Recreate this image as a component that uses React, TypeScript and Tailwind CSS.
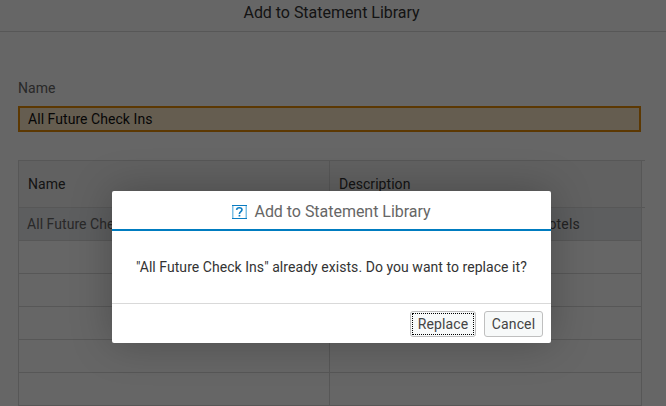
const rows = [
  { name: "All Future Check Ins", description: "hotels", selected: true },
  { name: "", description: "", selected: false },
  { name: "", description: "", selected: false },
  { name: "", description: "", selected: false },
  { name: "", description: "", selected: false },
  { name: "", description: "", selected: false },
];

function QuestionIcon() {
  return (
    <svg width="15" height="14" viewBox="0 0 15 14" fill="none" aria-hidden="true">
      <path d="M0.75 0.5V13.5M14.25 0.5V13.5" stroke="#7fc0e4" strokeWidth="1.5" />
      <path d="M0 0.5H15M0 13.5H15" stroke="#0a7cc2" />
      <path d="M4.6 4.9C4.7 3.4 5.8 2.7 7.3 2.7C8.9 2.7 10 3.5 10 4.8C10 6.6 7.4 6.6 7.4 8.9" stroke="#0a7cc2" strokeWidth="1.6" />
      <path d="M6.6 9.9H8.3V11.5H6.6Z" fill="#0a7cc2" />
    </svg>
  );
}

function StatementTable() {
  return (
    <div className="mt-7 ml-[18px] w-[627px]">
      <div className="flex h-12 border-y border-l border-[#d9d9d9] bg-[#f2f2f2] text-[#333]">
        <div className="flex w-[311px] items-center border-r border-[#d9d9d9] pl-[9px] tracking-[0.05px]">Name</div>
        <div className="flex w-[312px] items-center border-r border-[#d9d9d9] pl-[9px] tracking-[0.05px]">Description</div>
        <div className="flex-1 bg-white" />
      </div>
      {rows.map((row, i) => (
        <div
          key={i}
          className={`flex h-[33px] w-[624px] border-b border-x border-[#d9d9d9] text-[#666] ${row.selected ? "bg-[#e8eaee]" : "bg-white"}`}
        >
          <div className="flex w-[311px] items-center border-r border-[#d9d9d9] pl-2 tracking-[0.05px]">{row.name}</div>
          <div className="flex flex-1 items-center justify-end pr-[61px] tracking-[0.2px] text-[#555]">{row.description}</div>
        </div>
      ))}
    </div>
  );
}

export default function App() {
  return (
    <div className="relative h-[406px] w-[666px] overflow-hidden bg-white font-['Roboto',sans-serif] text-sm whitespace-nowrap">
      <header className="flex h-8 items-center justify-center border-b border-[#d9d9d9] pr-[3px] pb-[5px] text-base tracking-[-0.03px] text-[#333]">
        Add to Statement Library
      </header>
      <div className="mt-[45px] ml-[18px] h-[29px] leading-[22px] tracking-[0.05px] text-[#666]">Name</div>
      <div className="ml-[18px] flex h-[26px] w-[623px] items-center border-2 border-[#e78c07] bg-[#fce8c8] pl-2 tracking-[0.05px] text-[#111]">
        All Future Check Ins
      </div>
      <StatementTable />
      <div className="absolute inset-0 bg-black/60" />
      <section
        role="dialog"
        className="absolute top-[191px] left-[112px] flex h-[152px] w-[439px] flex-col rounded-[2px] bg-white shadow-[0_0_40px_0_rgba(0,0,0,0.25)]"
      >
        <div className="flex h-10 items-center justify-center gap-[7px] border-b-2 border-[#007cc0] pt-1 text-base tracking-[-0.03px] text-[#666]">
          <QuestionIcon />
          <span>Add to Statement Library</span>
        </div>
        <p className="flex flex-1 items-center pl-6 tracking-[0.05px] text-[#333]">
          "All Future Check Ins" already exists. Do you want to replace it?
        </p>
        <footer className="flex h-10 items-start justify-end gap-2 border-t border-[#d9d9d9] pt-[7px] pr-2 text-[#444]">
          <button className="h-[26px] w-[66px] rounded-[3px] border border-[#bfbfbf] bg-[#f7f9f9] p-px">
            <span className="flex h-full items-center justify-center border border-dotted border-black tracking-[0.15px]">Replace</span>
          </button>
          <button className="flex h-[26px] w-[59px] items-center justify-center rounded-[3px] border border-[#bfbfbf] bg-[#f7f9f9] tracking-[0.15px]">
            Cancel
          </button>
        </footer>
      </section>
    </div>
  );
}
